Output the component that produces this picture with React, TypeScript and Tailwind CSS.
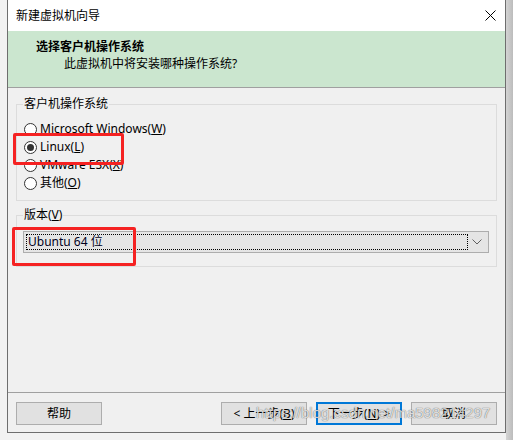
import React from "react";

const font = "font-['Noto_Sans','Noto_Sans_CJK_SC',sans-serif]";

function Radio({ checked, children }: { checked?: boolean; children: React.ReactNode }) {
  return (
    <div className="flex h-[18px] items-center">
      <span className="flex h-[13px] w-[13px] items-center justify-center rounded-full border border-[#333333] bg-white">
        {checked && <span className="h-[7px] w-[7px] rounded-full bg-[#333333]" />}
      </span>
      <span className="ml-[3px] text-[12px] leading-[16px] text-black">{children}</span>
    </div>
  );
}

function Btn({ children, primary }: { children: React.ReactNode; primary?: boolean }) {
  return (
    <div
      className={
        "flex h-[23px] w-[86px] items-center justify-center bg-[#e1e1e1] text-[12px] text-black " +
        (primary ? "border-2 border-[#0078d7]" : "border border-[#adadad]")
      }
    >
      {children}
    </div>
  );
}

export default function App() {
  return (
    <div className={"relative flex h-[440px] w-[513px] overflow-hidden bg-[#f2f2f2] " + font}>
      <div className="w-[7px] shrink-0" />
      <div className="flex h-[433px] w-[499px] shrink-0 flex-col border-x border-b border-[#6e6e6e] bg-[#f0f0f0]">
        <div className="flex h-[31px] items-center justify-between bg-white pl-[8px] pr-[9px]">
          <span className="text-[12px] text-black">新建虚拟机向导</span>
          <svg width="11" height="11" viewBox="0 0 11 11">
            <path d="M0.5 0.5 L10.5 10.5 M10.5 0.5 L0.5 10.5" stroke="#000" strokeWidth="1" />
          </svg>
        </div>
        <div className="flex h-[57px] flex-col border-b border-[#a0a0a0] bg-[#cbe6cf] pl-[28px] pt-[7px]">
          <span className="text-[12px] font-bold leading-[18px] text-black">选择客户机操作系统</span>
          <span className="pl-[28px] text-[12px] leading-[16px] text-black">此虚拟机中将安装哪种操作系统?</span>
        </div>
        <div className="flex flex-1 flex-col px-[8px] pt-[16px]">
          <div className="relative border border-[#dcdcdc] pb-[8px] pl-[7px] pt-[15px]">
            <span className="absolute left-[6px] top-[-9px] bg-[#f0f0f0] px-[1px] text-[12px] leading-[16px] text-black">
              客户机操作系统
            </span>
            <Radio>
              Microsoft Windows(<u>W</u>)
            </Radio>
            <Radio checked>
              Linux(<u>L</u>)
            </Radio>
            <Radio>
              VMware ESX(<u>X</u>)
            </Radio>
            <Radio>
              其他(<u>O</u>)
            </Radio>
          </div>
          <div className="relative mt-[14px] border border-[#dcdcdc] pb-[13px] pl-[6px] pr-[7px] pt-[15px]">
            <span className="absolute left-[6px] top-[-9px] bg-[#f0f0f0] px-[1px] text-[12px] leading-[16px] text-black">
              版本(<u>V</u>)
            </span>
            <div className="flex h-[22px] items-center border border-[#adadad] bg-[#e5e5e5] pl-[2px] pr-[4px]">
              <div className="flex h-[16px] w-[442px] items-center border border-dotted border-black pl-[1px] text-[12px] text-[#000020]">
                Ubuntu 64 位
              </div>
              <div className="flex flex-1 justify-end pr-[2px]">
                <svg width="10" height="6" viewBox="0 0 10 6">
                  <path d="M0.5 0.5 L5 5 L9.5 0.5" stroke="#606060" strokeWidth="1" fill="none" />
                </svg>
              </div>
            </div>
          </div>
        </div>
        <div className="flex h-[40px] items-start border-t border-[#a0a0a0] px-[8px] pt-[9px]">
          <Btn>帮助</Btn>
          <div className="flex-1" />
          <div className="flex gap-[9px]">
            <Btn>
              &lt; 上一步(<u>B</u>)
            </Btn>
            <Btn primary>
              下一步(<u>N</u>) &gt;
            </Btn>
            <Btn>取消</Btn>
          </div>
        </div>
      </div>
      <div className="w-[7px] shrink-0 bg-gradient-to-r from-[#d4d4d4] to-[#bcbcbc]" />

      <div className="pointer-events-none absolute left-[13px] top-[133px] h-[32px] w-[111px] rounded-[2px] border-[3px] border-[#f52222]" />
      <div className="pointer-events-none absolute left-[12px] top-[227px] h-[39px] w-[124px] rounded-[2px] border-[3px] border-[#f52222]" />
      <div className="pointer-events-none absolute left-[256px] top-[404px] font-['Liberation_Sans',sans-serif] text-[15px] leading-[18px] text-[rgba(255,255,255,0.8)] [text-shadow:0_0_1px_rgba(0,0,0,0.5),0_0_1px_rgba(0,0,0,0.3)]">
        https://blog.csdn.net/ma598214297
      </div>
    </div>
  );
}
